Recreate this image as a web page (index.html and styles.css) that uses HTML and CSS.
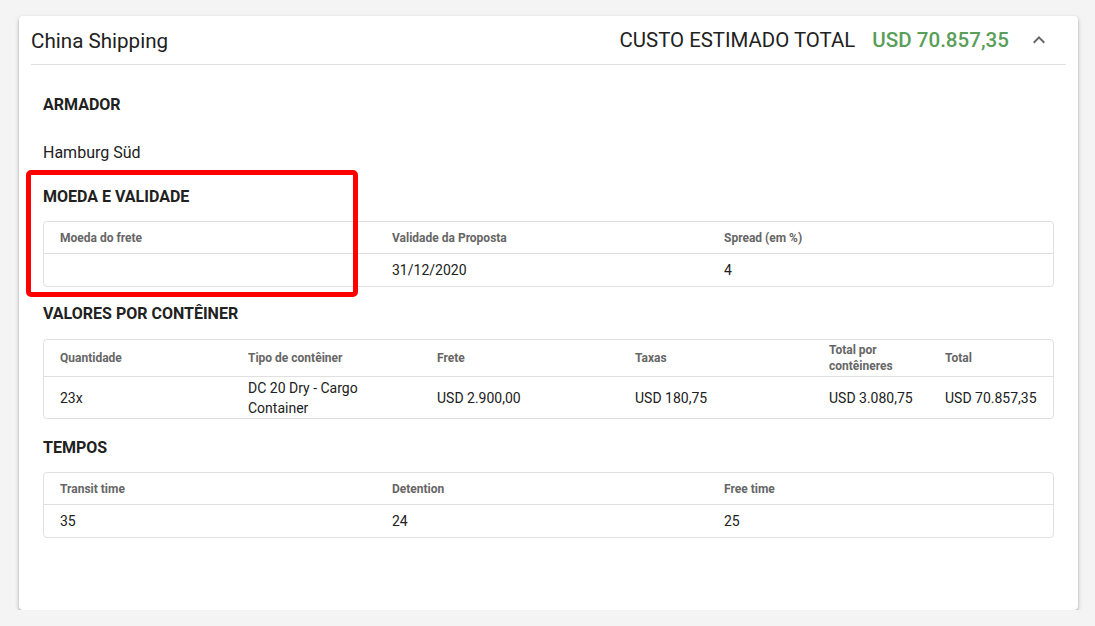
FILE: index.html
```html
<!DOCTYPE html>
<html lang="pt">
<head>
<meta charset="utf-8">
<link rel="stylesheet" href="styles.css">
</head>
<body>
<div class="card">
  <div class="card-header">
    <div class="title">China Shipping</div>
    <div class="total">
      <span class="total-label">CUSTO ESTIMADO TOTAL</span>
      <span class="total-value">USD 70.857,35</span>
      <svg class="chevron" width="24" height="24" viewBox="0 0 24 24"><path d="M7.41 15.41L12 10.83l4.59 4.58L18 14l-6-6-6 6z" fill="#666"/></svg>
    </div>
  </div>
  <div class="card-body">
    <h3 class="section-title">ARMADOR</h3>
    <p class="plain">Hamburg Süd</p>

    <div class="annotated">
      <h3 class="section-title">MOEDA E VALIDADE</h3>
      <div class="annot"></div>
    </div>
    <div class="tbl cols3 t-moeda">
      <div class="th">Moeda do frete</div>
      <div class="th">Validade da Proposta</div>
      <div class="th">Spread (em %)</div>
      <div class="td"></div>
      <div class="td">31/12/2020</div>
      <div class="td">4</div>
    </div>

    <h3 class="section-title">VALORES POR CONTÊINER</h3>
    <div class="tbl cols6 t-valores">
      <div class="th">Quantidade</div>
      <div class="th">Tipo de contêiner</div>
      <div class="th">Frete</div>
      <div class="th">Taxas</div>
      <div class="th">Total por contêineres</div>
      <div class="th">Total</div>
      <div class="td">23x</div>
      <div class="td">DC 20 Dry - Cargo Container</div>
      <div class="td">USD 2.900,00</div>
      <div class="td">USD 180,75</div>
      <div class="td">USD 3.080,75</div>
      <div class="td">USD 70.857,35</div>
    </div>

    <h3 class="section-title">TEMPOS</h3>
    <div class="tbl cols3 t-tempos">
      <div class="th">Transit time</div>
      <div class="th">Detention</div>
      <div class="th">Free time</div>
      <div class="td">35</div>
      <div class="td">24</div>
      <div class="td">25</div>
    </div>
  </div>
</div>
</body>
</html>
```

FILE: styles.css
```css
* { box-sizing: border-box; }
html, body { margin: 0; padding: 0; }
body {
  background: #f4f4f4;
  font-family: Roboto, "Liberation Sans", sans-serif;
  color: #212121;
  padding: 16px 17px 0 19px;
}
.card {
  background: #fff;
  border-radius: 4px;
  box-shadow: 0 2px 4px rgba(0,0,0,0.25), 0 1px 2px rgba(0,0,0,0.12);
  height: 594px;
  padding: 0 12px;
}
.card-header {
  display: flex;
  align-items: center;
  justify-content: space-between;
  height: 49px;
  border-bottom: 1px solid #e0e0e0;
}
.title {
  font-size: 20.6px;
  color: #212121;
  padding-top: 1px;
}
.total {
  display: flex;
  align-items: center;
}
.total-label {
  font-size: 20.4px;
  color: #212121;
}
.total-value {
  font-size: 20.6px;
  font-weight: 500;
  color: #5a9e5a;
  margin-left: 17px;
}
.chevron {
  margin-left: 18px;
  margin-right: 15px;
}
.card-body {
  padding: 29px 12px 0 12px;
}
.section-title {
  font-size: 16px;
  font-weight: 700;
  margin: 0;
  line-height: 22px;
  color: #212121;
}
.plain {
  font-size: 16px;
  margin: 26px 0 0 0;
  line-height: 22px;
}
.annotated {
  position: relative;
  margin-top: 22px;
}
.annot {
  position: absolute;
  left: -17px;
  top: -16px;
  width: 332px;
  height: 127px;
  border: 5px solid #f00;
  border-radius: 5px;
  pointer-events: none;
  z-index: 2;
}
.tbl {
  display: grid;
  border: 1px solid #e0e0e0;
  border-radius: 4px;
}
.t-moeda { margin: 13px 0 16px; }
.t-valores { margin: 14px 0 18px; }
.t-tempos { margin: 13px 0 0; }
.cols3 { grid-template-columns: 332px 332px 1fr; }
.cols6 { grid-template-columns: 188px 189px 198px 194px 116px 1fr; }
.th {
  font-size: 12px;
  font-weight: 700;
  color: #666;
  padding: 0 16px;
  height: 32px;
  display: flex;
  align-items: center;
  line-height: 16px;
  border-bottom: 1px solid #e0e0e0;
}
.td {
  font-size: 14px;
  color: #212121;
  padding: 0 16px;
  height: 32px;
  display: flex;
  align-items: center;
  line-height: 20px;
}
.cols6 .th { height: 37px; }
.cols6 .td { height: 41px; }
```
